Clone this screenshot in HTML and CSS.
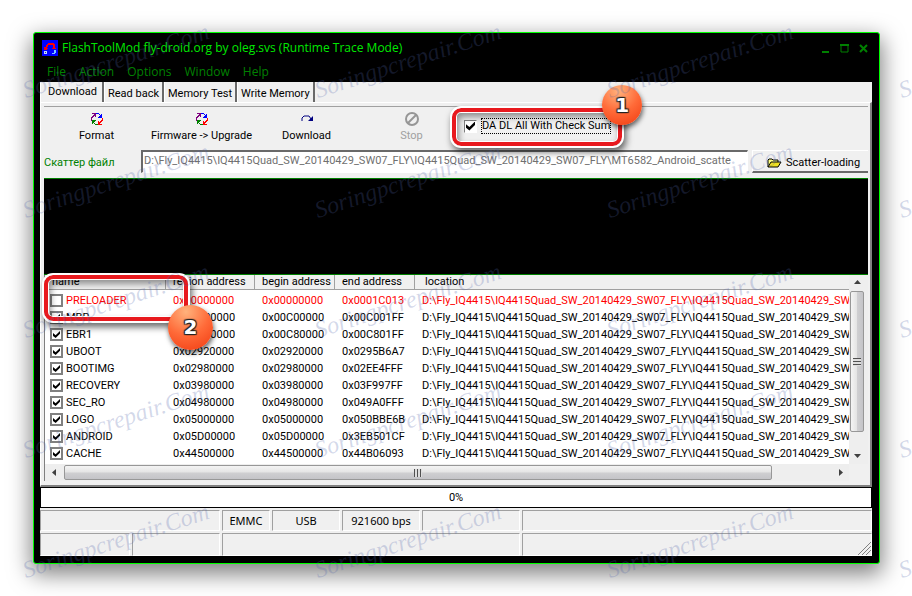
FILE: index.html
```html
<!DOCTYPE html>
<html lang="en">
<head>
  <meta charset="UTF-8">
  <meta name="viewport" content="width=device-width, initial-scale=1">
  <title>FlashToolMod</title>
  <link rel="stylesheet" href="styles.css">
</head>
<body>
  <div class="window">
    <div class="titlebar">
      <svg class="app-icon" viewBox="0 0 16 16" width="16" height="16" shape-rendering="crispEdges">
        <rect width="16" height="16" fill="#0000ff"/>
        <path d="M6 3h6v1h1v4h1v1h-3V5H6v2H5v3H2V7h2V5h1V4h1z" fill="#ff0000"/>
        <path d="M2 8h1v1H2zM5 8h1v1H5zM10 8h1v1h-1z" fill="#c00040"/>
        <path d="M2 11h3v3H2z" fill="#c0d8ff"/>
        <path d="M3 12h1v1H3z" fill="#404080"/>
        <path d="M12 10h2v3h-1v1h-3v-1h2z" fill="#80c8ff"/>
      </svg>
      <span class="title">FlashToolMod fly-droid.org by oleg.svs (Runtime Trace Mode)</span>
      <div class="win-buttons">
        <button type="button" aria-label="Minimize"><svg width="9" height="9"><path d="M1 8h7" stroke="#008000" stroke-width="2"/></svg></button>
        <button type="button" aria-label="Maximize"><svg width="9" height="9"><path d="M1 1h7v7H1z" fill="none" stroke="#008000"/><path d="M0 1h9" stroke="#008000" stroke-width="2"/></svg></button>
        <button type="button" aria-label="Close"><svg width="9" height="9"><path d="M1 1l7 7M8 1L1 8" stroke="#008000" stroke-width="2"/></svg></button>
      </div>
    </div>
    <div class="menu">
      <button type="button">File</button>
      <button type="button">Action</button>
      <button type="button">Options</button>
      <button type="button">Window</button>
      <button type="button">Help</button>
    </div>

    <div class="client">
      <div class="tabs">
        <button type="button" class="tab active">Download</button>
        <button type="button" class="tab">Read back</button>
        <button type="button" class="tab">Memory Test</button>
        <button type="button" class="tab">Write Memory</button>
      </div>
      <div class="page">
        <div class="toolbar">
          <button type="button" class="tool">
            <svg width="14" height="14" viewBox="0 0 14 14" shape-rendering="crispEdges"><use href="#cycle"/></svg>
            Format
          </button>
          <button type="button" class="tool">
            <svg width="14" height="14" viewBox="0 0 14 14" shape-rendering="crispEdges"><g id="cycle">
              <path d="M2 1h4v4H5V4H4v1H3v1H2v3H1V5h1V4h1V3h1V2H2z" fill="#800080"/>
              <path d="M6 1h3v1h1v1h1V2h1v4H8V5h1V4h1V3H9V2H6z" fill="#0000ff"/>
              <path d="M12 6h1v3h-1v1h-1v1h-1v1h2v1H8V9h1v1h1V9h1V8h1z" fill="#ff0000"/>
              <path d="M2 8h4v1H5v1H4v1h1v1h3v1H5v-1H4v-1H3v1H2z" fill="#008000"/>
            </g></svg>
            Firmware -&gt; Upgrade
          </button>
          <button type="button" class="tool">
            <svg width="14" height="14" viewBox="0 0 14 14"><path d="M2 9V6l2-2h5l2 3" fill="none" stroke="#000080"/><path d="M13 4v5H8z" fill="#000080"/></svg>
            Download
          </button>
          <button type="button" class="tool" disabled>
            <svg width="16" height="16" viewBox="0 0 16 16"><circle cx="8" cy="8" r="6" fill="none" stroke="#969696" stroke-width="2"/><path d="M4 12l8-8" stroke="#969696" stroke-width="2"/></svg>
            Stop
          </button>
          <div class="option">
            <input type="checkbox" id="checksum" checked>
            <label for="checksum">DA DL All With Check Sum</label>
            <span class="callout callout-option"></span>
            <span class="badge badge-option">1</span>
          </div>
        </div>

        <div class="scatter">
          <label for="scatterFile">Скаттер файл</label>
          <input type="text" id="scatterFile" readonly value="D:\Fly_IQ4415\IQ4415Quad_SW_20140429_SW07_FLY\IQ4415Quad_SW_20140429_SW07_FLY\MT6582_Android_scatte">
          <button type="button">
            <svg width="15" height="12" viewBox="0 0 15 12"><path d="M1 10V3l1-1h3l1 1h5v2" fill="#ffff80" stroke="#000"/><path d="M1 10l3-5h10l-3 5z" fill="#f0e020" stroke="#000"/></svg>
            Scatter-loading
          </button>
        </div>

        <div class="log"></div>

        <div class="list">
          <div class="rows">
            <table>
              <colgroup><col class="c-name"><col class="c-region"><col class="c-addr"><col class="c-addr"><col></colgroup>
              <thead>
                <tr><th>name</th><th>region address</th><th>begin address</th><th>end address</th><th>location</th></tr>
              </thead>
              <tbody id="parts"></tbody>
            </table>
          </div>
          <div class="vscroll">
            <svg width="7" height="4"><path d="M0 4l3.500-4L7 4z" fill="#404040"/></svg>
            <div class="thumb"><i></i></div>
            <svg width="7" height="4"><path d="M0 0h7L3.500 4z" fill="#404040"/></svg>
          </div>
          <div class="hscroll">
            <svg width="4" height="7"><path d="M4 0v7L0 3.500z" fill="#404040"/></svg>
            <div class="thumb"><i></i></div>
            <svg width="4" height="7"><path d="M0 0v7l4-3.500z" fill="#404040"/></svg>
          </div>
          <span class="callout callout-list"></span>
          <span class="badge badge-list">2</span>
        </div>
      </div>

      <div class="progress">0%</div>

      <div class="status status-top">
        <span></span><span>EMMC</span><span>USB</span><span>921600 bps</span><span></span><span></span>
      </div>
      <div class="status status-bottom">
        <span></span><span></span><span></span>
        <span class="grip"><svg width="14" height="14"><path d="M1 14L14 1M5 14l9-9M9 14l5-5" stroke="#808080"/></svg></span>
      </div>
    </div>
  </div>
  <div class="watermarks" id="watermarks" aria-hidden="true"></div>

  <script src="script.js"></script>
</body>
</html>
```
FILE: styles.css
```css
* {
  box-sizing: border-box;
}
body {
  margin: 0;
  padding: 32px 32px 32px 33px;
  background: #fff;
  color: #000;
  font-family: Roboto, "Liberation Sans", sans-serif;
  font-size: 11px;
  line-height: 14px;
  position: relative;
  overflow: hidden;
}
button, input {
  font: inherit;
  color: inherit;
  margin: 0;
}
button {
  background: none;
  border: none;
  padding: 0;
  white-space: nowrap;
}
.window {
  background: #000;
  border: 1px solid #00ff00;
  border-radius: 3px;
  padding: 0 7px 7px 6px;
  box-shadow: 0 8px 22px 2px rgba(0, 0, 0, 0.5);
}
.titlebar {
  display: flex;
  align-items: center;
  gap: 4px;
  height: 30px;
  padding: 0 4px 0 2px;
  color: #00e800;
  font-family: "Open Sans", sans-serif;
  font-size: 12px;
}
.title {
  flex: 1;
}
.win-buttons {
  display: flex;
  gap: 10px;
}
.win-buttons button {
  height: 9px;
  width: 9px;
}
.win-buttons svg {
  display: block;
}
.menu {
  display: flex;
  align-items: flex-start;
  gap: 13px;
  height: 19px;
  padding: 2px 0 0 7px;
  color: #008000;
  font-family: "Open Sans", sans-serif;
  font-size: 12px;
}
.client {
  background: #f0f0f0;
}
.tabs {
  display: flex;
  height: 20px;
}
.tab {
  padding: 4px 3px 0 3px;
  border-right: 2px solid #696969;
  border-left: 1px solid #fff;
}
.tab.active {
  padding: 0 5px 0 7px;
}
.page {
  border: 1px solid #fff;
  border-right: 2px solid #808080;
  border-bottom: 2px solid #808080;
  padding: 3px 2px 4px 3px;
}
.toolbar {
  display: flex;
  height: 44px;
  border-top: 1px solid #a0a0a0;
}
.tool {
  width: 105px;
  display: flex;
  flex-direction: column;
  align-items: center;
  justify-content: space-between;
  padding: 5px 0 7px;
}
.tool:disabled {
  color: #a0a0a0;
  padding-top: 4px;
}
.option {
  display: flex;
  align-items: center;
  gap: 4px;
  height: 16px;
  margin: 11px 0 0;
  position: relative;
}
.option label {
  border: 1px dotted #000;
}
input[type="checkbox"] {
  appearance: none;
  width: 13px;
  height: 13px;
  border: 2px solid #808080;
  background: #fff;
  position: relative;
  flex: none;
}
input[type="checkbox"]:checked::before {
  content: "";
  position: absolute;
  inset: 1px;
  background: #000;
  clip-path: polygon(0 30%, 38% 62%, 100% 0, 100% 38%, 38% 100%, 0 70%);
}
.option input[type="checkbox"] {
  border-width: 1px;
  border-color: #808080 #fff #fff #808080;
}
.scatter {
  display: flex;
  align-items: stretch;
  height: 23px;
  margin-bottom: 5px;
}
.scatter label {
  width: 97px;
  padding-top: 6px;
  color: #008000;
}
.scatter input {
  flex: 1;
  min-width: 0;
  border: 1px solid #fff;
  border-top: 2px solid #696969;
  border-left: 2px solid #696969;
  background: #fff;
  color: #707070;
  padding: 0 1px 2px;
}
.scatter button {
  width: 116px;
  margin-left: 4px;
  padding: 3px 0 0 6px;
  display: flex;
  align-items: center;
  justify-content: center;
  gap: 4px;
  border: 1px solid #fff;
  border-right: none;
  border-bottom: 2px solid #696969;
}
.log {
  height: 97px;
  background: #000;
  border: 1px solid #008000;
  border-width: 1px 0;
}
.list {
  display: grid;
  grid-template-columns: 1fr 19px;
  grid-template-rows: 189px 17px;
  border-left: 1px solid #808080;
  position: relative;
}
.rows {
  background: #fff;
  overflow: hidden;
}
table {
  width: 100%;
  table-layout: fixed;
  border-collapse: separate;
  border-spacing: 0;
}
.c-name {
  width: 121px;
}
.c-region {
  width: 89px;
}
.c-addr {
  width: 80px;
}
th {
  height: 15px;
  padding: 0 0 0 7px;
  background: #f0f0f0;
  border-right: 1px solid #a0a0a0;
  border-bottom: 1px solid #a0a0a0;
  font-weight: normal;
  text-align: left;
  line-height: 14px;
  white-space: nowrap;
}
th:last-child {
  padding-left: 10px;
  border-right: none;
}
tbody::before {
  content: "";
  display: block;
  height: 2px;
}
td {
  height: 17px;
  padding: 0 0 0 7px;
  white-space: nowrap;
  overflow: hidden;
}
td:first-child {
  padding-left: 5px;
}
td label {
  display: flex;
  align-items: center;
  gap: 3px;
}
.locked td {
  color: #ff0000;
}
.vscroll, .hscroll {
  display: flex;
  align-items: center;
  justify-content: space-between;
  background: #eee;
}
.vscroll {
  flex-direction: column;
  padding: 5px 4px 6px 1px;
}
.hscroll {
  padding: 1px 6px 1px 7px;
}
.thumb {
  border: 1px solid #979797;
  border-radius: 2px;
  display: flex;
  align-items: center;
  justify-content: center;
}
.vscroll .thumb {
  width: 14px;
  height: 141px;
  margin-bottom: 15px;
  background: linear-gradient(90deg, #f4f4f4, #e4e4e4 48%, #cfcfd1 52%, #c4c4c8);
}
.hscroll .thumb {
  flex: 1;
  height: 15px;
  margin: 0 67px 0 8px;
  background: linear-gradient(#f4f4f4, #e4e4e4 48%, #cfcfd1 52%, #c4c4c8);
}
.thumb i {
  width: 8px;
  height: 8px;
  background: repeating-linear-gradient(90deg, #505050 0 1px, #ddd 1px 3px);
}
.vscroll .thumb i {
  background: repeating-linear-gradient(#505050 0 1px, #ddd 1px 3px);
}
.progress {
  height: 21px;
  border: 1px solid #000;
  background: #fff;
  text-align: center;
  line-height: 19px;
}
.status {
  display: grid;
  gap: 2px;
  padding-top: 2px;
  font-family: "Noto Sans", sans-serif;
}
.status-top {
  grid-template-columns: 180px 48px 68px 78px 98px 1fr;
}
.status-bottom {
  grid-template-columns: 90px 88px 298px 1fr;
}
.status span {
  height: 21px;
  border: 1px solid #fff;
  border-top-color: #a0a0a0;
  border-left-color: #a0a0a0;
  text-align: center;
  line-height: 20px;
}
.status-bottom span {
  height: 23px;
}
.status .grip {
  display: flex;
  align-items: flex-end;
  justify-content: flex-end;
}

/* numbered red frames over the window */
.callout {
  position: absolute;
  border: 4px solid #e8191e;
  border-radius: 9px;
  outline: 2px solid #fff;
  box-shadow: 2px 4px 7px 2px rgba(0, 0, 0, 0.6), inset 0 0 0 1px #fff, inset 2px 4px 6px 1px rgba(0, 0, 0, 0.4);
  pointer-events: none;
}
.callout-option {
  inset: -10px -11px -12px -12px;
}
.callout-list {
  left: -1px;
  top: 0;
  width: 144px;
  height: 46px;
}
.badge {
  position: absolute;
  width: 40px;
  height: 40px;
  border-radius: 50%;
  background: radial-gradient(circle at 40% 15%, #ffb27c, #ff6a38 50%, #f03a10);
  box-shadow: 1px 3px 5px rgba(0, 0, 0, 0.6);
  color: #fff;
  font: bold 20px/40px "DejaVu Sans", sans-serif;
  text-align: center;
  text-shadow: 1px 1px 1px #222, -1px -1px 1px #222, 1px -1px 1px #222, -1px 1px 1px #222;
}
.badge-option {
  right: -31px;
  top: -33px;
}
.badge-list {
  left: 123px;
  top: 30px;
  width: 45px;
  height: 45px;
  line-height: 45px;
}
.watermarks {
  position: absolute;
  inset: 0;
  overflow: hidden;
  pointer-events: none;
  display: grid;
  grid-template-columns: repeat(4, 292px);
  grid-auto-rows: 120px;
  padding-left: 27px;
  color: rgba(80, 100, 170, 0.25);
  font: italic 24px/24px "Liberation Serif", serif;
}
.watermarks span {
  align-self: start;
  justify-self: start;
  margin-top: 78px;
  transform: rotate(-18deg);
  transform-origin: 0 100%;
}
```
FILE: script.js
```javascript
const dir = 'D:\\Fly_IQ4415\\IQ4415Quad_SW_20140429_SW07_FLY\\IQ4415Quad_SW_20140429_SW';

// name, region, begin, end
const parts = [
  ['PRELOADER', '0x00000000', '0x00000000', '0x0001C013'],
  ['MBR', '0x00C00000', '0x00C00000', '0x00C001FF'],
  ['EBR1', '0x00C80000', '0x00C80000', '0x00C801FF'],
  ['UBOOT', '0x02920000', '0x02920000', '0x0295B6A7'],
  ['BOOTIMG', '0x02980000', '0x02980000', '0x02EE4FFF'],
  ['RECOVERY', '0x03980000', '0x03980000', '0x03F997FF'],
  ['SEC_RO', '0x04980000', '0x04980000', '0x049A0FFF'],
  ['LOGO', '0x05000000', '0x05000000', '0x050BBE6B'],
  ['ANDROID', '0x05D00000', '0x05D00000', '0x3EB501CF'],
  ['CACHE', '0x44500000', '0x44500000', '0x44B06093']
];

document.getElementById('parts').innerHTML = parts.map(([name, region, begin, end], i) => `
  <tr class="${i === 0 ? 'locked' : ''}">
    <td><label><input type="checkbox" ${i === 0 ? '' : 'checked'}>${name}</label></td>
    <td>${region}</td><td>${begin}</td><td>${end}</td><td>${dir}</td>
  </tr>`).join('');

document.getElementById('watermarks').innerHTML = '<span>Soringpcrepair.Com</span>'.repeat(20);
```
